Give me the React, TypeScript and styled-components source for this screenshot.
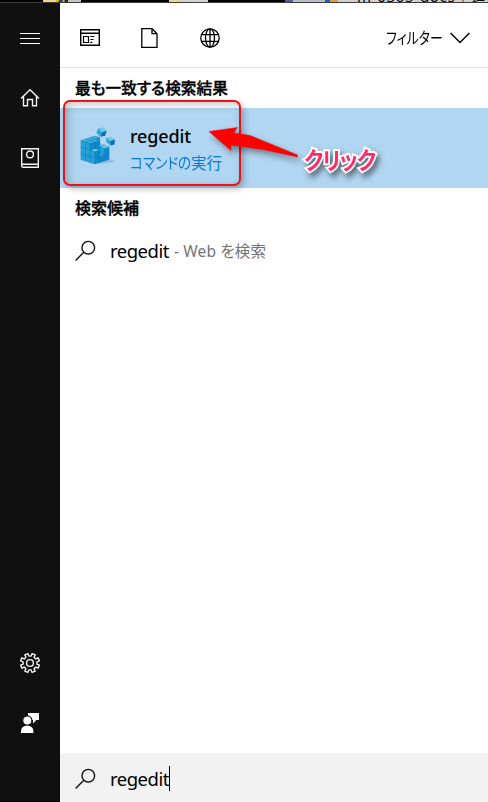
import React from 'react';
import styled, { createGlobalStyle } from 'styled-components';

const GlobalStyle = createGlobalStyle`
  * { box-sizing: border-box; }
  body { margin: 0; overflow: hidden; background: #fff; }
`;

const Screen = styled.div`
  display: flex;
  flex-direction: column;
  width: 488px;
  height: 802px;
  color: #000;
  font-family: "Noto Sans", "Noto Sans CJK JP", sans-serif;
`;

const DesktopStrip = styled.div`
  display: flex;
  flex: none;
  height: 3px;
  overflow: hidden;
  background: #000;
  border-bottom: 1px solid #3c3c3c;
`;

const StripPiece = styled.div<{ $w: number; $bg: string }>`
  flex: none;
  width: ${p => p.$w}px;
  background: ${p => p.$bg};
`;

const StripLabel = styled.div`
  flex: none;
  width: 159px;
  height: 3px;
  padding-left: 19px;
  background: #d0d0ce;
  font-size: 15px;
  line-height: 3px;
  letter-spacing: 0.7px;
  white-space: nowrap;
  span { display: inline-block; transform: translateY(-5px); }
`;

const Body = styled.div`
  display: flex;
  flex: 1;
  min-height: 0;
`;

const Sidebar = styled.nav`
  display: flex;
  flex-direction: column;
  width: 60px;
  padding: 5px 0 48px;
  background: #101010;
  border-bottom: 1px solid #000;
`;

const SideButton = styled.div<{ $push?: boolean }>`
  display: flex;
  align-items: center;
  justify-content: center;
  flex: none;
  height: 60px;
  margin-top: ${p => (p.$push ? 'auto' : '0')};
`;

const Panel = styled.main`
  display: flex;
  flex-direction: column;
  flex: 1;
  min-width: 0;
  background: #fff;
`;

const Toolbar = styled.header`
  display: flex;
  align-items: center;
  flex: none;
  height: 65px;
  padding: 5px 18px 0 0;
  border-bottom: 1px solid #e4e4e4;
`;

const ToolButton = styled.div`
  display: flex;
  align-items: center;
  justify-content: center;
  width: 60px;
  height: 60px;
`;

const Filter = styled.div`
  display: flex;
  align-items: center;
  gap: 8px;
  margin-left: auto;
`;

const Label = styled.span<{ $size: number; $spacing?: number; $weight?: number; $color?: string; $palt?: boolean; $stroke?: number }>`
  display: block;
  font-size: ${p => p.$size}px;
  line-height: 24px;
  letter-spacing: ${p => p.$spacing ?? 0}px;
  font-weight: ${p => p.$weight ?? 400};
  color: ${p => p.$color ?? '#000'};
  font-feature-settings: ${p => (p.$palt ? '"palt"' : 'normal')};
  -webkit-text-stroke: ${p => p.$stroke ?? 0}px currentColor;
  white-space: nowrap;
`;

/* Narrow kana: glyphs are compressed horizontally into a fixed advance. */
const Narrow = styled.span<{ $width: number; $scale: number }>`
  display: inline-block;
  width: ${p => p.$width}px;
  transform: scaleX(${p => p.$scale});
  transform-origin: left center;
`;

const SectionTitle = styled.h2`
  display: flex;
  align-items: center;
  flex: none;
  height: 40px;
  margin: 0;
  padding-left: 15px;
`;

const BestMatch = styled.section`
  position: relative;
  display: flex;
  align-items: center;
  flex: none;
  height: 80px;
  padding-left: 20px;
  gap: 14px;
  background: #b1d6f1;
`;

const RegistryDrawing = styled.svg`
  margin-bottom: 4px;
`;

const MatchText = styled.div`
  display: flex;
  flex-direction: column;
  gap: 3px;
  padding-top: 2px;
`;

const Highlight = styled.div`
  position: absolute;
  left: 3px;
  top: -8px;
  width: 178px;
  height: 86px;
  border: 2px solid #f0101c;
  border-radius: 7px;
  box-shadow: 3px 3px 6px rgba(0, 0, 0, 0.25), inset 3px 3px 8px rgba(0, 0, 0, 0.22);
`;

const Arrow = styled.svg`
  position: absolute;
  left: 140px;
  top: 12px;
  filter: drop-shadow(3px 4px 3px rgba(0, 0, 0, 0.4));
`;

const Callout = styled.div`
  position: absolute;
  left: 244px;
  top: 34px;
  color: #ff2b6b;
  font-family: "Noto Sans CJK JP", sans-serif;
  font-size: 24px;
  font-weight: 700;
  line-height: 34px;
  letter-spacing: -1px;
  font-feature-settings: "palt";
  white-space: nowrap;
  -webkit-text-stroke: 4px #fff;
  paint-order: stroke fill;
  transform: scaleX(0.89);
  transform-origin: left center;
  filter: drop-shadow(3px 4px 3px rgba(0, 0, 0, 0.5));
`;

const Suggestion = styled.div`
  display: flex;
  align-items: center;
  flex: none;
  height: 46px;
  padding-left: 15px;
`;

const Query = styled.div`
  width: 64px;
  margin-left: 14px;
`;

const SearchBar = styled.footer`
  display: flex;
  align-items: center;
  flex: none;
  height: 49px;
  margin-top: auto;
  padding: 2px 0 0 15px;
  background: #f2f2f2;
`;

const Typed = styled.div`
  display: flex;
  align-items: center;
  width: 60px;
  height: 25px;
  margin-left: 14px;
  border-right: 1px solid #000;
`;

const SearchIcon = () => (
  <svg width="21" height="22" viewBox="0 0 21 22" fill="none" stroke="#111" strokeWidth="1.4">
    <circle cx="13.3" cy="7.7" r="6.3" />
    <path d="M8.8 12.2L.6 20.4" />
  </svg>
);

/* Small cubes of the registry block, listed back to front: [right, left, level]. */
const registryCubes = (() => {
  const missing = new Set(['0,0,2', '1,0,2', '2,0,2', '2,1,2', '1,0,1']);
  const cubes: [number, number, number][] = [];
  for (let level = 0; level < 3; level++) {
    for (let a = 2; a >= 0; a--) {
      for (let b = 2; b >= 0; b--) {
        if (!missing.has(`${a},${b},${level}`)) cubes.push([a, b, level]);
      }
    }
  }
  return cubes;
})();

const RegistryIcon = () => (
  <RegistryDrawing width="36" height="38" viewBox="0 0 36 38">
    <ellipse cx="23" cy="34" rx="11" ry="2.5" fill="#6fa8cf" opacity=".5" />
    {registryCubes.map(([a, b, level]) => (
      <g
        key={`${a}${b}${level}`}
        transform={`translate(${15 + (a - b) * 4.7} ${37 - (a + b) * 1.5 - level * 6.3})`}
        stroke="#0a76b5"
        strokeWidth=".35"
      >
        <path d="M0 0l-4.7-1.500v-6.300L0-6.300z" fill="#26a2db" />
        <path d="M0 0l4.700-1.500v-6.300L0-6.300z" fill="#1089ca" />
        <path d="M0-6.300l-4.700-1.500L0-9.300l4.700 1.500z" fill={level === 1 ? '#6fd3f1' : '#3eb4e2'} />
      </g>
    ))}
    <path d="M18.500 1.200l4.700-.9 3.600 3.500-5 1.400z" fill="#6accec" />
    <path d="M18.500 1.200l3.300 4-1.300 4.600-4.200-4.100z" fill="#2ba5da" />
    <path d="M26.800 3.800l-1.600 5-4.700 1 1.300-4.600z" fill="#0870b0" />
    <path d="M26 10.500l5.400-.6 3.700 2.500-5 1.500z" fill="#6accec" />
    <path d="M26 10.500l4.100 3.400.7 4.800-4.500-3.600z" fill="#2ba5da" />
    <path d="M35.100 12.400l-.6 4.800-3.700 1.500-.7-4.800z" fill="#0870b0" />
  </RegistryDrawing>
);

const gearPath = (() => {
  const points: string[] = [];
  for (let i = 0; i < 8; i++) {
    const steps: [number, number][] = [[-13, 7], [-10, 9.6], [10, 9.6], [13, 7]];
    steps.forEach(([offset, radius]) => {
      const angle = ((i * 45 + 22.5 + offset) * Math.PI) / 180;
      points.push(`${(10 + radius * Math.cos(angle)).toFixed(2)} ${(10 + radius * Math.sin(angle)).toFixed(2)}`);
    });
  }
  return `M${points.join('L')}Z`;
})();

export default function App() {
  return (
    <>
      <GlobalStyle />
      <Screen>
        <DesktopStrip>
          <StripPiece $w={43} $bg="#000" />
          <StripPiece $w={13} $bg="#ecd58e" />
          <StripPiece $w={12} $bg="linear-gradient(100deg,#d8c000 20%,#26347e 30% 50%,#e0d020 60%,#222 80%)" />
          <StripPiece $w={13} $bg="#c4c4c4" />
          <StripPiece $w={88} $bg="#000" />
          <StripPiece $w={13} $bg="#ecd58e" />
          <StripPiece $w={26} $bg="#d4d4d4" />
          <StripPiece $w={77} $bg="#000" />
          <StripPiece $w={8} $bg="#5a5aa0" />
          <StripPiece $w={32} $bg="#b8bdc8" />
          <StripPiece $w={5} $bg="#0868b8" />
          <StripPiece $w={8} $bg="#d8a440" />
          <StripLabel><span>m-0365-docs｜追加</span></StripLabel>
        </DesktopStrip>
        <Body>
          <Sidebar>
            <SideButton>
              <svg width="20" height="12" viewBox="0 0 20 12" stroke="#fff" strokeWidth="1">
                <path d="M0 1.500h20M0 6.500h20M0 11.500h20" />
              </svg>
            </SideButton>
            <SideButton>
              <svg width="20" height="20" viewBox="0 0 20 20" fill="none" stroke="#f4f4f4" strokeWidth="1.4">
                <path d="M1 10.5L10 1.800l9 8.700M3.500 8.300v9.400h4v-6.200h5v6.200h4V8.300" />
              </svg>
            </SideButton>
            <SideButton>
              <svg width="20" height="20" viewBox="0 0 20 20" fill="none" stroke="#f4f4f4" strokeWidth="1.400">
                <path d="M1.700.7h16.600v18.500H3.200a1.500 1.500 0 0 1-1.500-1.500zM2 16.200h16.300" />
                <circle cx="10" cy="6.400" r="3.400" />
              </svg>
            </SideButton>
            <SideButton $push>
              <svg width="20" height="20" viewBox="0 0 20 20" fill="none" stroke="#f4f4f4" strokeWidth="1.400" strokeLinejoin="round">
                <path d={gearPath} />
                <circle cx="10" cy="10" r="3.400" />
              </svg>
            </SideButton>
            <SideButton>
              <svg width="20" height="20" viewBox="0 0 20 20" fill="#fff">
                <path d="M8 0h11v7h-2.700L13 10.400V7H8z" />
                <circle cx="7.300" cy="7.500" r="4.600" fill="#fff" stroke="#101010" strokeWidth="1.200" />
                <path d="M1 20v-2a6.200 5.600 0 0 1 12.400 0v2z" />
              </svg>
            </SideButton>
          </Sidebar>
          <Panel>
            <Toolbar>
              <ToolButton>
                <svg width="20" height="17" viewBox="0 0 20 17" fill="none" stroke="#000">
                  <path d="M.7.7h18.600v15.600H.7zM.7 4.300h18.600" strokeWidth="1.400" />
                  <path d="M3.500 7.500h5v6h-5zM10.300 7.500h4M10.300 10.500h3.200M10.300 13.400h2" strokeWidth="1.200" />
                </svg>
              </ToolButton>
              <ToolButton>
                <svg width="18" height="20" viewBox="0 0 18 20" fill="none" stroke="#000" strokeWidth="1.300">
                  <path d="M.8.7H11l5 5v13.600H.8zM11 .7v5h5" />
                </svg>
              </ToolButton>
              <ToolButton>
                <svg width="20" height="20" viewBox="0 0 20 20" fill="none" stroke="#000" strokeWidth="1.300">
                  <circle cx="10" cy="10" r="9.200" />
                  <ellipse cx="10" cy="10" rx="4.500" ry="9.200" />
                  <path d="M1.500 6.700h17M1.500 13.300h17M10 1v18" />
                </svg>
              </ToolButton>
              <Filter>
                <Label $size={16} $palt><Narrow $width={56} $scale={0.81}>フィルター</Narrow></Label>
                <svg width="20" height="12" viewBox="0 0 20 12" fill="none" stroke="#000" strokeWidth="1.400">
                  <path d="M.6 1l9.400 9.400L19.400 1" />
                </svg>
              </Filter>
            </Toolbar>
            <SectionTitle><Label $size={15.7} $weight={500} $stroke={0.35} $palt>最も一致する検索結果</Label></SectionTitle>
            <BestMatch>
              <RegistryIcon />
              <MatchText>
                <Label $size={18} $weight={500} $spacing={-0.15}>regedit</Label>
                <Label $size={15.5} $color="#0a78d2" $palt>
                  <Narrow $width={61} $scale={0.88}>コマンドの</Narrow>実行
                </Label>
              </MatchText>
              <Highlight />
              <Arrow width="102" height="40" viewBox="200 120 102 40">
                <path d="M209 131.500L237.300 127.500 234 133 250 135.500 297.500 155 297.500 157 263 149.500 231 145 231 150.500z" fill="#fe0000" stroke="#fe0000" strokeWidth=".5" strokeLinejoin="round" />
              </Arrow>
              <Callout>クリック</Callout>
            </BestMatch>
            <SectionTitle><Label $size={16} $weight={500} $stroke={0.35}>検索候補</Label></SectionTitle>
            <Suggestion>
              <SearchIcon />
              <Query><Label $size={18.5} $spacing={-0.5}>regedit</Label></Query>
              <Label $size={15.5} $spacing={0.15} $color="#737373" $palt>- Web を検索</Label>
            </Suggestion>
            <SearchBar>
              <SearchIcon />
              <Typed><Label $size={18.5} $spacing={-0.5}>regedit</Label></Typed>
            </SearchBar>
          </Panel>
        </Body>
      </Screen>
    </>
  );
}
